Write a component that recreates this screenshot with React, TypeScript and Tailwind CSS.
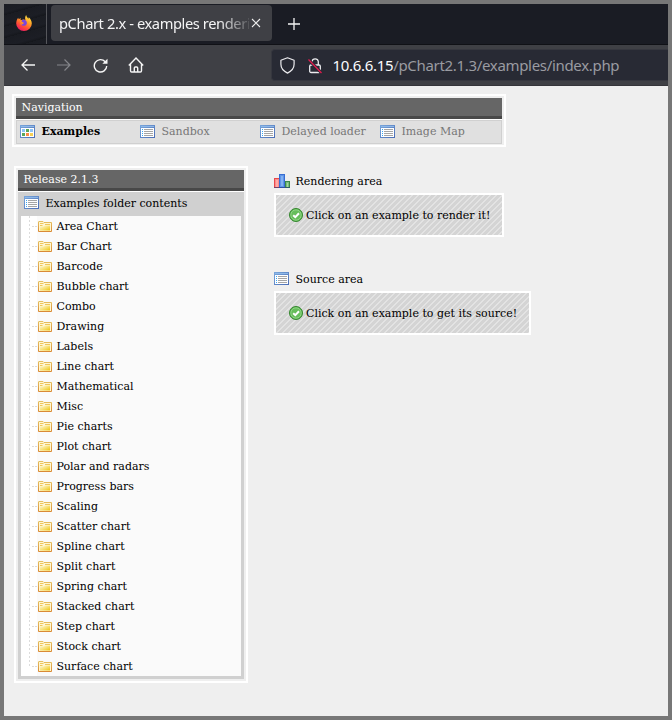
import React from "react";

const folders = [
  "Area Chart", "Bar Chart", "Barcode", "Bubble chart", "Combo", "Drawing", "Labels", "Line chart",
  "Mathematical", "Misc", "Pie charts", "Plot chart", "Polar and radars", "Progress bars", "Scaling",
  "Scatter chart", "Spline chart", "Split chart", "Spring chart", "Stacked chart", "Step chart",
  "Stock chart", "Surface chart",
];

function WindowFrame({ children }: { children: React.ReactNode }) {
  return (
    <svg width="15" height="13" viewBox="0 0 15 13" className="block shrink-0" shapeRendering="crispEdges">
      <defs>
        <linearGradient id="winEdge" x1="0" y1="0" x2="1" y2="1">
          <stop offset="0" stopColor="#7aa7dc" />
          <stop offset="1" stopColor="#4a6cb4" />
        </linearGradient>
      </defs>
      <rect width="15" height="13" fill="url(#winEdge)" />
      <rect x="1" y="1" width="13" height="1" fill="#8fb9e8" />
      <rect x="1" y="3" width="13" height="9" fill="#fff" />
      {children}
    </svg>
  );
}

function ListIcon() {
  return (
    <WindowFrame>
      {[4, 6, 8, 10].map((y) => (
        <g key={y}>
          <rect x="2" y={y} width="1" height="1" fill="#35a5f5" />
          <rect x="4" y={y} width="9" height="1" fill="#a5a5a5" />
        </g>
      ))}
    </WindowFrame>
  );
}

function TilesIcon() {
  return (
    <WindowFrame>
      <rect x="2" y="4" width="3" height="3" fill="#8fc4f7" />
      <rect x="6" y="4" width="3" height="3" fill="#5ba65b" />
      <rect x="10" y="4" width="3" height="3" fill="#8fc4f7" />
      <rect x="2" y="8" width="3" height="3" fill="#5ba65b" />
      <rect x="6" y="8" width="3" height="3" fill="#ff8a45" />
      <rect x="10" y="8" width="3" height="3" fill="#f5cf55" />
    </WindowFrame>
  );
}

function FolderIcon() {
  return (
    <svg width="14" height="11" viewBox="0 0 14 11" className="block shrink-0">
      <defs>
        <linearGradient id="folderFill" x1="0" y1="0" x2="1" y2="1">
          <stop offset="0" stopColor="#fff8cf" />
          <stop offset="0.5" stopColor="#f7e27c" />
          <stop offset="1" stopColor="#ecc410" />
        </linearGradient>
        <linearGradient id="folderEdge" x1="0" y1="0" x2="0" y2="1">
          <stop offset="0" stopColor="#e6c060" />
          <stop offset="1" stopColor="#d98a35" />
        </linearGradient>
      </defs>
      <path d="M.5 10.500V1q0-.5.500-.5h4l1 1H13.500V10.500z" fill="#fff6d2" stroke="url(#folderEdge)" />
      <path d="M2 2.500h3.500M2 4.500h2.500M7 3.500h5" stroke="#edc75c" />
      <path d="M2 5.500h4l1-1H12V9.500H2z" fill="url(#folderFill)" />
    </svg>
  );
}

function BarsIcon() {
  return (
    <svg width="16" height="14" viewBox="0 0 16 14" className="block shrink-0" shapeRendering="crispEdges">
      <rect x="0" y="4" width="6" height="10" fill="#e8484b" />
      <rect x="1" y="5" width="4" height="8" fill="#fa8b8b" />
      <rect x="2" y="6" width="2" height="7" fill="#ffaaa6" />
      <rect x="11" y="7" width="5" height="7" fill="#3d8a49" />
      <rect x="12" y="8" width="3" height="5" fill="#79bb7c" />
      <rect x="13" y="9" width="1" height="4" fill="#a4d6a2" />
      <rect x="5" y="0" width="6" height="14" fill="#386dd2" />
      <rect x="6" y="1" width="4" height="12" fill="#5f96e8" />
      <rect x="7" y="2" width="2" height="10" fill="#83b1f2" />
      <rect x="0" y="13" width="16" height="1" fill="#283c80" opacity=".6" />
    </svg>
  );
}

function CheckIcon() {
  return (
    <svg width="14" height="14" viewBox="0 0 14 14" className="block shrink-0">
      <circle cx="7" cy="7" r="6.500" fill="#55b44c" stroke="#35862f" />
      <circle cx="7" cy="7" r="5.200" fill="#66bd5b" stroke="#a0dc94" strokeWidth=".8" />
      <path d="M4.200 7.200 6.300 9.200 10 5.200" fill="none" stroke="#fff" strokeWidth="2" />
    </svg>
  );
}

function FirefoxIcon() {
  return (
    <svg width="16" height="16" viewBox="0 0 16 16" className="block">
      <defs>
        <linearGradient id="fxFlame" x1=".85" y1="0" x2=".3" y2="1">
          <stop offset="0" stopColor="#fff34a" />
          <stop offset=".4" stopColor="#ffa126" />
          <stop offset=".7" stopColor="#ff5035" />
          <stop offset="1" stopColor="#ee1767" />
        </linearGradient>
      </defs>
      <path d="M10.200 0c.2 1.900 1.300 2.500 2.300 3.700l.2-1.500c2 1.600 3.100 4 3.100 6.300A7.800 7.500 0 0 1 .2 8.500C.2 6.300.8 4.500 2.200 2.700l.5 1.500C4 3.200 5 3.300 5 3.300c-.5.700-.5 1.500-.2 2C6.500 4 8.800 4.200 9.400 5.200 8.800 3.300 9.200 1 10.200 0z" fill="url(#fxFlame)" />
      <path d="M6 5.200c1.500-.9 3.500-.5 4.400 1 1.200 2.200 0 4.600-2.500 4.600-1.600 0-2.700-1-2.700-2.100 1 .6 2.200.2 2.700-.7L5.800 7z" fill="#7b45dc" />
      <path d="M4.900 5.500c-.6.800-.5 1.800.3 2.100l2 .3c-.5 1.200-1.800 1.500-2.900.9" fill="none" stroke="#ff9d25" strokeWidth="1" />
    </svg>
  );
}

function BrowserChrome() {
  return (
    <div className="font-['Noto_Sans',sans-serif]">
      <div className="flex h-[41px] border-b border-[#101116] bg-[#1a1c24]">
        <div className="flex w-[43px] shrink-0 items-start border-r border-[#56575c] bg-[repeating-linear-gradient(164deg,#1a1c22_0px,#1c1e25_8px,#15171c_11px)] pt-[11px] pl-3">
          <FirefoxIcon />
        </div>
        <div className="mt-px ml-1 flex h-9 w-[221px] shrink-0 items-center rounded bg-[#3f4045] pl-2">
          <div className="w-[190px] overflow-hidden text-[14.67px] leading-9 tracking-[-0.4px] whitespace-nowrap text-[#f4f4f5] [mask-image:linear-gradient(to_right,#000_160px,transparent_195px)]">
            pChart 2.x - examples renderi
          </div>
          <svg width="10" height="10" viewBox="0 0 10 10" className="ml-[2px] shrink-0">
            <path d="m1 1 8 8M9 1 1 9" stroke="#eee" strokeWidth="1.100" />
          </svg>
        </div>
        <svg width="12" height="12" viewBox="0 0 12 12" className="mt-[14px] ml-[15.5px]">
          <path d="M6 0v12M0 6h12" stroke="#f5f5f5" strokeWidth="1.300" />
        </svg>
      </div>
      <div className="flex h-[41px] items-center border-b border-[#35353a] bg-[#3f4045] pl-[17px]">
        <svg width="14" height="14" viewBox="0 0 14 14" fill="none" stroke="#f5f5f5" strokeWidth="1.300">
          <path d="M14 7H1M6.500 1.500 1 7l5.500 5.500" />
        </svg>
        <svg width="14" height="14" viewBox="0 0 14 14" fill="none" stroke="#85868b" strokeWidth="1.200" className="ml-[22px]">
          <path d="M0 7h13M7.500 1.500 13 7l-5.500 5.500" />
        </svg>
        <svg width="15" height="15" viewBox="0 0 15 15" fill="none" stroke="#f5f5f5" strokeWidth="1.400" className="ml-[21.5px]">
          <path d="M12.200 3.800A6.200 6.200 0 1 0 13.700 8" />
          <path d="M14.500.7v5H9.300z" fill="#f5f5f5" stroke="none" />
        </svg>
        <svg width="16" height="16" viewBox="0 0 16 16" fill="none" stroke="#f5f5f5" strokeWidth="1.400" className="ml-5">
          <path d="M.8 8.500 8 1l7.200 7.500M2.500 7v6.800q0 1.200 1.200 1.200h8.600q1.200 0 1.200-1.200V7" />
          <path d="M6.300 15v-4q0-1 1-1h1.400q1 0 1 1v4" />
        </svg>
        <div className="ml-[127.5px] flex h-8 min-w-0 flex-1 items-center rounded-l border-y border-l border-[#36373f] bg-[#282a34] pl-[7.5px]">
          <svg width="15" height="17" viewBox="0 0 15 17" fill="none" stroke="#ececef" strokeWidth="1.200" className="shrink-0">
            <path d="m7.500.8 6.600 2.500v4c0 4-2.500 6.800-6.600 8.800C3.400 14.100.9 11.300.9 7.300v-4z" strokeLinejoin="round" />
          </svg>
          <svg width="14" height="17" viewBox="0 0 14 17" fill="none" stroke="#ececef" strokeWidth="1.300" className="ml-[13.5px] shrink-0">
            <rect x="1.700" y="8" width="10.600" height="7.500" rx="1.300" />
            <path d="M4 8V4.500a3.200 3.200 0 0 1 6.300 0V8" />
            <path d="m.5 2.500 13 13.500" stroke="#282a34" strokeWidth="3" />
            <path d="m.5 2.500 13 13.500" stroke="#e31b4d" />
          </svg>
          <div className="ml-[10.5px] text-[15px] tracking-[-0.32px] whitespace-nowrap text-[#9a9ba1]">
            <span className="text-[#fbfbfe]">10.6.6.15</span>/pChart2.1.3/examples/index.php
          </div>
        </div>
      </div>
    </div>
  );
}

function PanelHeader({ title }: { title: string }) {
  return (
    <div className="mb-px h-[21px] border-b-[3px] border-[#484848] bg-[#666] pl-[5.5px] leading-5 text-white">
      {title}
    </div>
  );
}

function NavItem({ icon, label, active = false }: { icon: React.ReactNode; label: string; active?: boolean }) {
  return (
    <div className="flex w-[120px] shrink-0 items-center whitespace-nowrap">
      {icon}
      <span className={active ? "ml-[6.5px] font-bold text-black" : "ml-[6.5px] text-[#777]"}>{label}</span>
    </div>
  );
}

function Area({ icon, title, message, width }: { icon: React.ReactNode; title: string; message: string; width: string }) {
  return (
    <div>
      <div className="flex h-[22px] items-start">
        <div className="w-[21.5px] pt-[3px]">{icon}</div>
        <div className="leading-[22px]">{title}</div>
      </div>
      <div className={`${width} flex h-11 items-center border-2 border-white bg-[repeating-linear-gradient(135deg,#d4d4d4_0px,#d4d4d4_2.2px,#e3e3e3_2.8px,#e3e3e3_3.6px,#d4d4d4_4.243px)] pl-[13px] whitespace-nowrap`}>
        <CheckIcon />
        <span className="ml-[3px]">{message}</span>
      </div>
    </div>
  );
}

export default function App() {
  return (
    <div className="h-[720px] w-[672px] overflow-hidden border-4 border-[#777] bg-[#efefef]">
      <BrowserChrome />
      <main className="px-2 pt-2 font-['DejaVu_Serif',serif] text-[11px] leading-none text-black">
        <nav className="h-[53px] w-[494px] border-2 border-white p-0.5">
          <PanelHeader title="Navigation" />
          <div className="flex h-[24px] items-start border border-[#d0d0d0] bg-[#e0e0e0] pt-[4px] pl-[3px] shadow-[0_-1px_0_#fff]">
            <NavItem icon={<TilesIcon />} label="Examples" active />
            <NavItem icon={<ListIcon />} label="Sandbox" />
            <NavItem icon={<ListIcon />} label="Delayed loader" />
            <NavItem icon={<ListIcon />} label="Image Map" />
          </div>
        </nav>
        <div className="mt-[19px] flex items-start pl-0.5">
          <aside className="h-[517px] w-[234px] border-2 border-white p-0.5">
            <PanelHeader title="Release 2.1.3" />
            <div className="bg-[#d0d0d0] px-[3px] pb-[3px] shadow-[0_-1px_0_#fff]">
              <div className="flex h-6 items-center pl-[3px]">
                <div className="pb-[3px]"><ListIcon /></div>
                <span className="ml-[6.5px] pb-[2px]">Examples folder contents</span>
              </div>
              <ul className="bg-[#fafafa]">
                {folders.map((name, i) => (
                  <li key={name} className="flex h-5 items-center">
                    <svg width="16" height="20" className="block shrink-0 bg-white" shapeRendering="crispEdges">
                      <path d={i === folders.length - 1 ? "M8.500 0V10" : "M8.500 0V20"} stroke="#dcdcdc" strokeDasharray="2 2" />
                      <path d="M11 10.500h5" stroke="#dcdcdc" strokeDasharray="2 1" />
                    </svg>
                    <div className="ml-px pt-px"><FolderIcon /></div>
                    <span className="ml-[4.5px]">{name}</span>
                  </li>
                ))}
              </ul>
            </div>
          </aside>
          <div className="ml-[26px] flex flex-col gap-8 pt-[5px]">
            <Area icon={<BarsIcon />} title="Rendering area" message="Click on an example to render it!" width="w-[230px]" />
            <Area icon={<ListIcon />} title="Source area" message="Click on an example to get its source!" width="w-[257px]" />
          </div>
        </div>
      </main>
    </div>
  );
}
